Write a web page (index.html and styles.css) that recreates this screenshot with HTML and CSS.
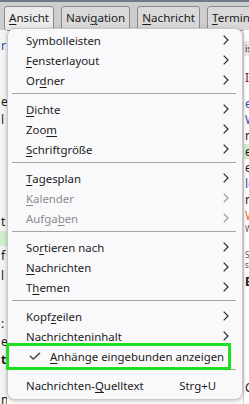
FILE: index.html
```html
<!DOCTYPE html>
<html>
<head>
<meta charset="UTF-8">
<title>Ansicht</title>
<link rel="stylesheet" href="styles.css">
</head>
<body>
<div class="window">
  <div class="menubar">
    <span class="mbtn active"><u>A</u>nsicht</span>
    <span class="mbtn">Navi<u>g</u>ation</span>
    <span class="mbtn"><u>N</u>achricht</span>
    <span class="mbtn"><u>T</u>ermin</span>
  </div>

  <div class="panes">
    <div class="pane-left">
      <div class="row blue" style="top:8px">r</div>
      <div class="row" style="top:64px">e</div>
      <div class="row" style="top:82px">l</div>
      <div class="row" style="top:184px">t</div>
      <div class="row green" style="top:201px">&nbsp;</div>
      <div class="row" style="top:218px">f</div>
      <div class="row" style="top:238px">l</div>
      <div class="row" style="top:286px">:</div>
      <div class="row" style="top:304px">e</div>
      <div class="row bold" style="top:322px">t</div>
      <div class="row" style="top:362px">n</div>
    </div>
    <div class="pane-right">
      <div class="row head" style="top:11px">is</div>
      <div class="row red" style="top:40px">I</div>
      <div class="row blue" style="top:66px">e</div>
      <div class="row blue" style="top:82px">W</div>
      <div class="row" style="top:98px">n</div>
      <div class="row green" style="top:114px">e</div>
      <div class="row" style="top:130px">e</div>
      <div class="row blue" style="top:146px">le</div>
      <div class="row" style="top:162px">n</div>
      <div class="row orange" style="top:178px">Wi</div>
      <div class="row small" style="top:194px">W</div>
      <div class="row small" style="top:220px">S</div>
      <div class="row small" style="top:230px">s</div>
      <div class="row bold" style="top:244px">B</div>
      <div class="row" style="top:350px">C</div>
    </div>
  </div>

  <div class="menu">
    <div class="item">Symbolleisten<span class="chev"><svg width="6" height="10" viewBox="0 0 6 10"><polyline points="0.7,0.7 5,5 0.7,9.3"/></svg></span></div>
    <div class="item"><u>F</u>ensterlayout<span class="chev"><svg width="6" height="10" viewBox="0 0 6 10"><polyline points="0.7,0.7 5,5 0.7,9.3"/></svg></span></div>
    <div class="item">Or<u>d</u>ner<span class="chev"><svg width="6" height="10" viewBox="0 0 6 10"><polyline points="0.7,0.7 5,5 0.7,9.3"/></svg></span></div>
    <div class="sep"></div>
    <div class="item"><u>D</u>ichte<span class="chev"><svg width="6" height="10" viewBox="0 0 6 10"><polyline points="0.7,0.7 5,5 0.7,9.3"/></svg></span></div>
    <div class="item">Zoo<u>m</u><span class="chev"><svg width="6" height="10" viewBox="0 0 6 10"><polyline points="0.7,0.7 5,5 0.7,9.3"/></svg></span></div>
    <div class="item"><u>S</u>chriftgröße<span class="chev"><svg width="6" height="10" viewBox="0 0 6 10"><polyline points="0.7,0.7 5,5 0.7,9.3"/></svg></span></div>
    <div class="sep"></div>
    <div class="item"><u>T</u>agesplan<span class="chev"><svg width="6" height="10" viewBox="0 0 6 10"><polyline points="0.7,0.7 5,5 0.7,9.3"/></svg></span></div>
    <div class="item disabled"><u>K</u>alender<span class="chev"><svg width="6" height="10" viewBox="0 0 6 10"><polyline points="0.7,0.7 5,5 0.7,9.3"/></svg></span></div>
    <div class="item disabled">Aufga<u>b</u>en<span class="chev"><svg width="6" height="10" viewBox="0 0 6 10"><polyline points="0.7,0.7 5,5 0.7,9.3"/></svg></span></div>
    <div class="sep"></div>
    <div class="item">So<u>r</u>tieren nach<span class="chev"><svg width="6" height="10" viewBox="0 0 6 10"><polyline points="0.7,0.7 5,5 0.7,9.3"/></svg></span></div>
    <div class="item"><u>N</u>achrichten<span class="chev"><svg width="6" height="10" viewBox="0 0 6 10"><polyline points="0.7,0.7 5,5 0.7,9.3"/></svg></span></div>
    <div class="item">T<u>h</u>emen<span class="chev"><svg width="6" height="10" viewBox="0 0 6 10"><polyline points="0.7,0.7 5,5 0.7,9.3"/></svg></span></div>
    <div class="sep"></div>
    <div class="item">Kopf<u>z</u>eilen<span class="chev"><svg width="6" height="10" viewBox="0 0 6 10"><polyline points="0.7,0.7 5,5 0.7,9.3"/></svg></span></div>
    <div class="item">Nachricht<u>e</u>ninhalt<span class="chev"><svg width="6" height="10" viewBox="0 0 6 10"><polyline points="0.7,0.7 5,5 0.7,9.3"/></svg></span></div>
    <div class="item checked"><span class="check"><svg width="12" height="8" viewBox="0 0 12 8"><polyline points="1,3.8 4.3,7 11,0.8"/></svg></span><u>A</u>nhänge eingebunden anzeigen</div>
    <div class="sep"></div>
    <div class="item">Nachrichten-<u>Q</u>uelltext<span class="key">Strg+U</span></div>
  </div>

  <div class="highlight"></div>
</div>
</body>
</html>
```

FILE: styles.css
```css
* {box-sizing: border-box;}
body {margin: 0; font-family: "Noto Sans", "Open Sans", sans-serif; font-size: 11.4px; color: #1b1b1b;}
u {text-decoration-thickness: 1px; text-underline-offset: 2px;}

.window {position: relative; width: 249px; height: 404px; overflow: hidden; background: #ffffff;}

.menubar {display: flex; gap: 7px; height: 30px; padding: 4px 0 0 4px; background: #cdcdcd; border-top: 2px solid #6e7a86;}
.mbtn {height: 25px; padding: 0 4px; border: 1px solid #8a8a8a; border-radius: 3px; background: #d9d9d9; font-size: 11.6px; line-height: 22px; white-space: nowrap;}
.mbtn.active {background: #ebebeb;}

.panes {position: relative; height: 374px;}
.pane-left, .pane-right {position: absolute; top: 0; bottom: 0; overflow: hidden;}
.pane-left {left: 0; width: 7px; background: #f4f4f4;}
.pane-right {left: 243px; right: 0; background: #ffffff; border-left: 1px solid #d6d6d6;}
.row {position: absolute; left: 0; right: 0; height: 15px; line-height: 15px; font-size: 12px; padding-left: 1px; white-space: nowrap;}
.row.blue {color: #1e4fa8;}
.row.red {color: #7a1b3a;}
.row.orange {color: #d9722a;}
.row.green {background: #cfeecd;}
.row.small {height: 9px; line-height: 9px; font-size: 8px; color: #555;}
.row.bold {font-weight: bold;}
.row.head {background: #e9e9e9; font-size: 9px;}

.menu {position: absolute; left: 7px; top: 28px; width: 236px; height: 372px; padding: 1px 0; background: #f9f9fb; border: 1px solid #c9c9c9; border-radius: 8px; box-shadow: 0 1px 4px rgba(0, 0, 0, 0.25);}
.item {display: flex; align-items: center; height: 20px; padding: 0 13px 0 18px; white-space: nowrap;}
.item.disabled {color: #8b8b8e;}
.item.checked {padding-left: 21px;}
.chev {margin-left: auto; display: flex;}
.chev svg polyline {fill: none; stroke: #2b2b2b; stroke-width: 1.2;}
.disabled .chev svg polyline {stroke: #9a9a9a;}
.check {display: flex; width: 21px;}
.check svg polyline {fill: none; stroke: #5a5a5a; stroke-width: 1.7;}
.key {margin-left: auto; padding-right: 13px;}
.sep {height: 1px; margin: 3px 6px 5px 4px; background: #a4a4a4;}

.highlight {position: absolute; left: 6px; top: 343px; width: 225px; height: 27px; border: 3px solid #1fe01f;}
```
